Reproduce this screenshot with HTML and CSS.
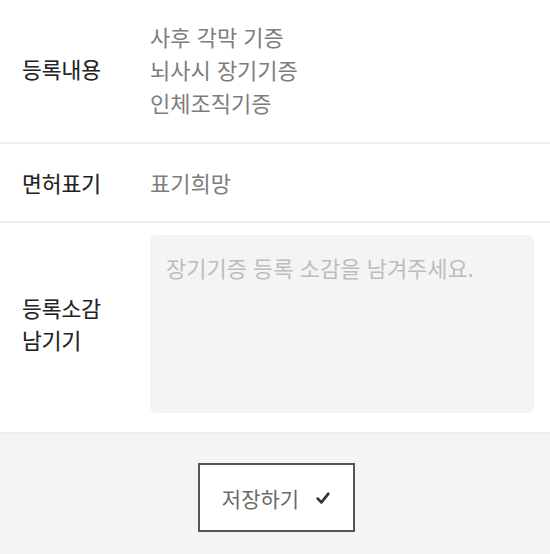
FILE: index.html
```html
<!DOCTYPE html>
<html lang="ko">
<head>
<meta charset="utf-8">
<link rel="stylesheet" href="styles.css">
</head>
<body>
<div class="form">
  <div class="row row-content">
    <div class="label">등록내용</div>
    <div class="value">
      <div>사후 각막 기증</div>
      <div>뇌사시 장기기증</div>
      <div>인체조직기증</div>
    </div>
  </div>
  <div class="row row-license">
    <div class="label">면허표기</div>
    <div class="value">표기희망</div>
  </div>
  <div class="row row-memo">
    <div class="label">등록소감<br>남기기</div>
    <textarea class="memo" placeholder="장기기증 등록 소감을 남겨주세요."></textarea>
  </div>
</div>
<div class="footer">
  <button class="save" type="button">저장하기<svg class="check" width="14" height="13" viewBox="0 0 14 13"><path d="M1.8 6.6 L5.4 10.4 L12.2 1.8" fill="none" stroke="#333" stroke-width="2.7" stroke-linecap="round" stroke-linejoin="round"/></svg></button>
</div>
</body>
</html>
```

FILE: styles.css
```css
* { box-sizing: border-box; }
html, body {
  margin: 0;
  padding: 0;
  background: #fff;
  font-family: "Noto Sans CJK KR", "Noto Sans", sans-serif;
}
.form { width: 550px; }
.row {
  display: flex;
  align-items: center;
  padding-left: 22px;
  border-bottom: 2px solid #efefef;
}
.label {
  width: 128px;
  flex: none;
  font-size: 21.5px;
  line-height: 32px;
  font-weight: 400;
  color: #222;
  -webkit-text-stroke: 0.15px #222;
}
.value {
  font-size: 22px;
  line-height: 33px;
  color: #7d7d7d;
  font-weight: 400;
}
.row-content { height: 144px; padding-bottom: 4px; }
.row-license { height: 79px; }
.row-memo {
  height: 209px;
  padding-top: 10px;
  padding-bottom: 17px;
  padding-right: 16px;
  border-bottom: none;
}
.memo {
  flex: 1;
  height: 178px;
  border: none;
  border-radius: 6px;
  background: #f4f4f4;
  resize: none;
  padding: 16px 16px;
  font-family: "Noto Sans CJK KR", "Noto Sans", sans-serif;
  font-size: 22px;
  line-height: 32px;
  color: #333;
  outline: none;
  margin: 0;
}
.memo::placeholder { color: #bdbdbd; }
.footer {
  height: 122px;
  background: #f4f4f4;
  border-top: 2px solid #ececec;
  display: flex;
  justify-content: center;
  padding-top: 29px;
  padding-left: 2px;
}
.save {
  width: 157px;
  height: 69px;
  border: 2px solid #555;
  background: #fff;
  display: flex;
  align-items: center;
  justify-content: center;
  gap: 17px;
  padding: 0 0 0 0;
  font-family: "Noto Sans CJK KR", "Noto Sans", sans-serif;
  font-size: 21px;
  color: #6a6a6a;
  margin: 0;
}
.check { flex: none; margin-top: 2px; }
```
